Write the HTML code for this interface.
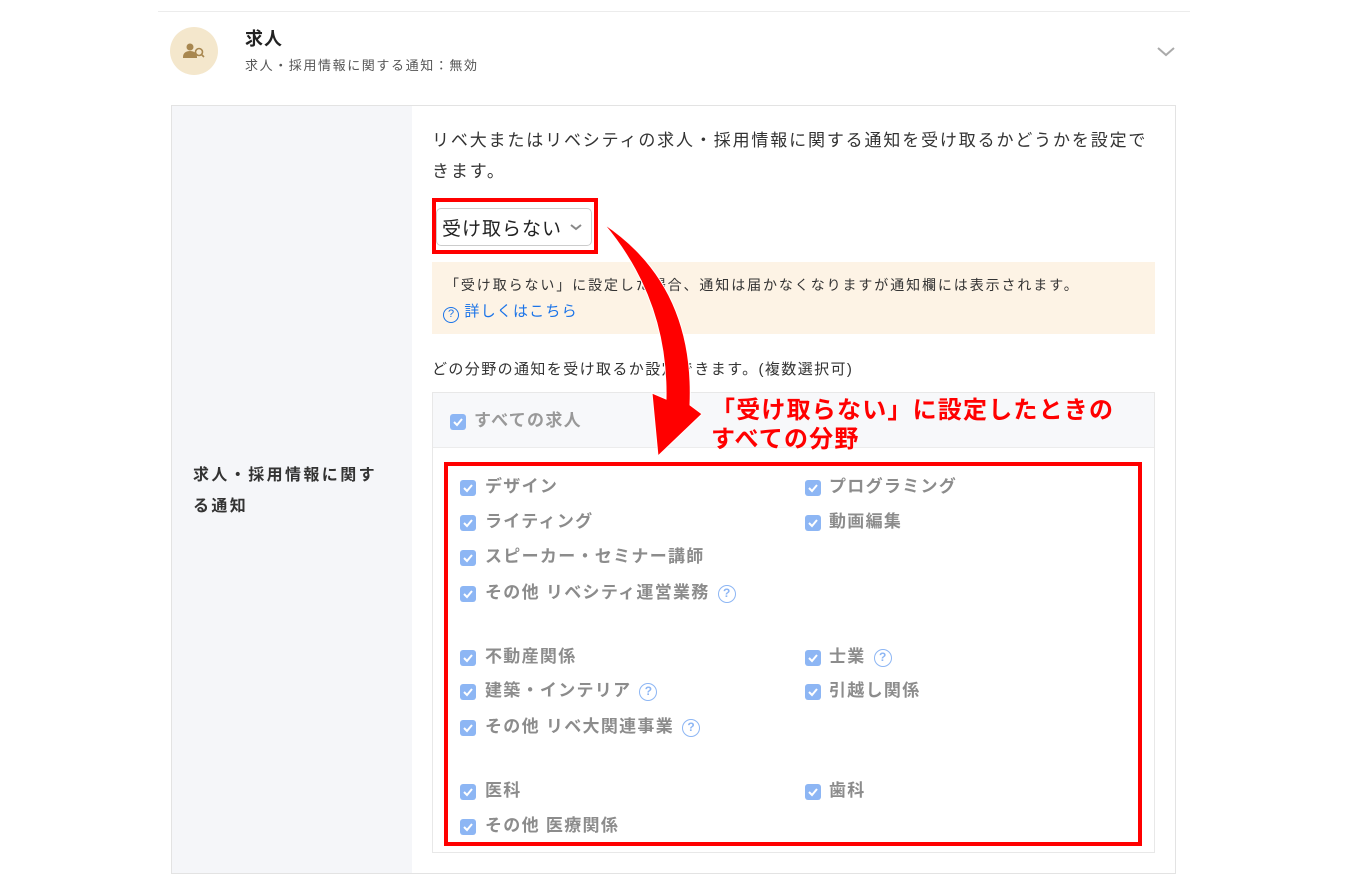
<!DOCTYPE html>
<html><head><meta charset="utf-8"><style>
*{margin:0;padding:0;box-sizing:border-box}
body{width:1350px;height:890px;background:#fff;position:relative;overflow:hidden;font-family:"Liberation Sans","Noto Sans CJK JP",sans-serif;color:#333}
.a{position:absolute;white-space:nowrap}
.cb{position:absolute;width:16px;height:16px;background:#8db6f4;border-radius:3px}
.cb svg{position:absolute;left:2px;top:2px}
.it{position:absolute;font-size:17px;letter-spacing:1.3px;font-weight:bold;color:#8c8c8c;white-space:nowrap;line-height:20px}
.q{display:inline-block;width:18px;height:18px;border:1.6px solid #8db6f4;border-radius:50%;color:#8db6f4;font-size:12px;line-height:15px;text-align:center;font-weight:bold;vertical-align:1px;margin-left:8px;letter-spacing:0}
</style></head><body>
<div class="a" style="left:158px;top:11px;width:1032px;height:1px;background:#ececec"></div>
<div class="a" style="left:170px;top:27px;width:48px;height:48px;border-radius:50%;background:#f4e7cc"></div>
<svg class="a" style="left:183px;top:42px" width="24" height="18" viewBox="0 0 24 18"><circle cx="7" cy="5" r="3.5" fill="#a8874f"/><path d="M0 15c0-4 3-6 7-6s7 2 7 6v1H0z" fill="#a8874f"/><circle cx="16" cy="10" r="3.5" fill="none" stroke="#a8874f" stroke-width="1.6"/><path d="M18.5 12.5l2.5 2.5" stroke="#a8874f" stroke-width="1.6"/></svg>
<div class="a" style="left:245px;top:25px;font-size:18px;font-weight:bold;color:#222;letter-spacing:1px">求人</div>
<div class="a" style="left:245px;top:55px;font-size:13px;letter-spacing:1.6px;color:#555">求人・採用情報に関する通知：無効</div>
<svg class="a" style="left:1156px;top:46px" width="20" height="12"><path d="M2 2l8 7 8-7" fill="none" stroke="#aaa" stroke-width="2"/></svg>

<div class="a" style="left:171px;top:105px;width:1005px;height:769px;border:1px solid #e3e3e3"></div>
<div class="a" style="left:172px;top:106px;width:240px;height:767px;background:#f5f6f9"></div>
<div class="a" style="left:193px;top:460px;font-size:16px;letter-spacing:2.4px;font-weight:bold;color:#333;line-height:31px">求人・採用情報に関す<br>る通知</div>

<div class="a" style="left:432px;top:125px;font-size:17px;letter-spacing:1.85px;line-height:31px;color:#333">リベ大またはリベシティの求人・採用情報に関する通知を受け取るかどうかを設定で<br>きます。</div>
<div class="a" style="left:432px;top:198px;width:166px;height:56px;border:4px solid #f00"></div>
<div class="a" style="left:436px;top:208px;width:156px;height:38px;border:1px solid #ccc;border-radius:5px;background:#fff"></div>
<div class="a" style="left:442px;top:214px;font-size:19px;letter-spacing:1px;color:#222">受け取らない</div>
<svg class="a" style="left:569px;top:223px" width="14" height="9"><path d="M2 2l5 4 5-4" fill="none" stroke="#888" stroke-width="2"/></svg>

<div class="a" style="left:432px;top:262px;width:723px;height:72px;background:#fdf3e5"></div>
<div class="a" style="left:445px;top:275px;font-size:14px;letter-spacing:1.9px;color:#333">「受け取らない」に設定した場合、通知は届かなくなりますが通知欄には表示されます。</div>
<div class="a" style="left:443px;top:300px;font-size:15px;letter-spacing:1.2px;color:#1a73e8"><span style="display:inline-block;width:16px;height:16px;border:1.5px solid #1a73e8;border-radius:50%;font-size:11px;line-height:13px;text-align:center;vertical-align:-1px;letter-spacing:0">?</span> 詳しくはこちら</div>
<div class="a" style="left:432px;top:358px;font-size:15px;letter-spacing:1.4px;color:#333">どの分野の通知を受け取るか設定できます。(複数選択可)</div>

<div class="a" style="left:432px;top:392px;width:723px;height:461px;border:1px solid #e8e8e8"></div>
<div class="a" style="left:433px;top:393px;width:721px;height:55px;background:#f7f8fa;border-bottom:1px solid #ececec"></div>
<div class="cb" style="left:450px;top:414px"><svg width="12" height="12"><path d="M2 6l3 3 5-6" fill="none" stroke="#fff" stroke-width="2"/></svg></div>
<div class="it" style="left:474px;top:411px;color:#999">すべての求人</div>

<div class="a" style="left:444px;top:462px;width:698px;height:384px;border:4px solid #f00"></div>

<div class="cb" style="left:460px;top:480px"><svg width="12" height="12"><path d="M2 6l3 3 5-6" fill="none" stroke="#fff" stroke-width="2"/></svg></div><div class="it" style="left:485px;top:477px">デザイン</div>
<div class="cb" style="left:805px;top:480px"><svg width="12" height="12"><path d="M2 6l3 3 5-6" fill="none" stroke="#fff" stroke-width="2"/></svg></div><div class="it" style="left:829px;top:477px">プログラミング</div>
<div class="cb" style="left:460px;top:515px"><svg width="12" height="12"><path d="M2 6l3 3 5-6" fill="none" stroke="#fff" stroke-width="2"/></svg></div><div class="it" style="left:485px;top:512px">ライティング</div>
<div class="cb" style="left:805px;top:515px"><svg width="12" height="12"><path d="M2 6l3 3 5-6" fill="none" stroke="#fff" stroke-width="2"/></svg></div><div class="it" style="left:829px;top:512px">動画編集</div>
<div class="cb" style="left:460px;top:550px"><svg width="12" height="12"><path d="M2 6l3 3 5-6" fill="none" stroke="#fff" stroke-width="2"/></svg></div><div class="it" style="left:485px;top:547px">スピーカー・セミナー講師</div>
<div class="cb" style="left:460px;top:586px"><svg width="12" height="12"><path d="M2 6l3 3 5-6" fill="none" stroke="#fff" stroke-width="2"/></svg></div><div class="it" style="left:485px;top:583px">その他 リベシティ運営業務<span class="q">?</span></div>

<div class="cb" style="left:460px;top:650px"><svg width="12" height="12"><path d="M2 6l3 3 5-6" fill="none" stroke="#fff" stroke-width="2"/></svg></div><div class="it" style="left:485px;top:647px">不動産関係</div>
<div class="cb" style="left:805px;top:650px"><svg width="12" height="12"><path d="M2 6l3 3 5-6" fill="none" stroke="#fff" stroke-width="2"/></svg></div><div class="it" style="left:829px;top:647px">士業<span class="q">?</span></div>
<div class="cb" style="left:460px;top:684px"><svg width="12" height="12"><path d="M2 6l3 3 5-6" fill="none" stroke="#fff" stroke-width="2"/></svg></div><div class="it" style="left:485px;top:681px">建築・インテリア<span class="q">?</span></div>
<div class="cb" style="left:805px;top:684px"><svg width="12" height="12"><path d="M2 6l3 3 5-6" fill="none" stroke="#fff" stroke-width="2"/></svg></div><div class="it" style="left:829px;top:681px">引越し関係</div>
<div class="cb" style="left:460px;top:720px"><svg width="12" height="12"><path d="M2 6l3 3 5-6" fill="none" stroke="#fff" stroke-width="2"/></svg></div><div class="it" style="left:485px;top:717px">その他 リベ大関連事業<span class="q">?</span></div>

<div class="cb" style="left:460px;top:784px"><svg width="12" height="12"><path d="M2 6l3 3 5-6" fill="none" stroke="#fff" stroke-width="2"/></svg></div><div class="it" style="left:485px;top:781px">医科</div>
<div class="cb" style="left:805px;top:784px"><svg width="12" height="12"><path d="M2 6l3 3 5-6" fill="none" stroke="#fff" stroke-width="2"/></svg></div><div class="it" style="left:829px;top:781px">歯科</div>
<div class="cb" style="left:460px;top:819px"><svg width="12" height="12"><path d="M2 6l3 3 5-6" fill="none" stroke="#fff" stroke-width="2"/></svg></div><div class="it" style="left:485px;top:816px">その他 医療関係</div>

<svg class="a" style="left:0;top:0" width="1350" height="890"><path d="M604 224 Q695 285 690 405 L702 414 L658 456 L652 393 L666 399 Q668 300 604 224 Z" fill="#f00" stroke="#fff" stroke-width="1"/></svg>
<div class="a" style="left:711px;top:396px;font-size:24px;letter-spacing:1.2px;font-weight:bold;color:#f00;line-height:29px">「受け取らない」に設定したときの<br>すべての分野</div>
</body></html>
